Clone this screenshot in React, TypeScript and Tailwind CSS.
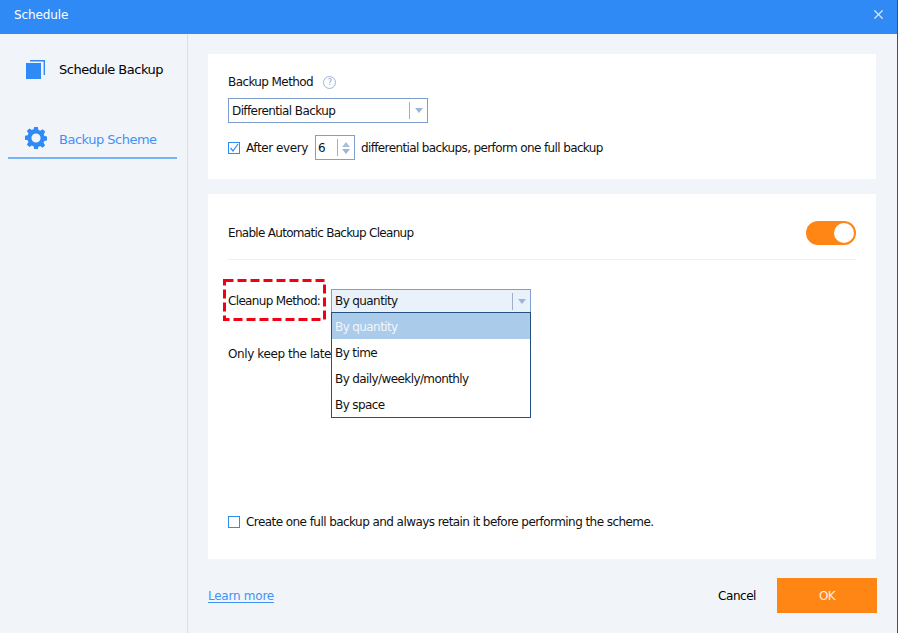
import React from 'react';
import { X } from 'lucide-react';

const Caret = () => (
  <svg width="8" height="5" viewBox="0 0 8 5" className="shrink-0">
    <path d="M0 0h8L4 5z" fill="#9db6d6" />
  </svg>
);

const GearIcon = () => (
  <svg width="22" height="22" viewBox="0 0 24 24" fill="#2f8af5" className="shrink-0">
    <path d="M10 0h4l.6 3.2c.7.2 1.3.5 1.9.9l2.8-1.7 2.8 2.8-1.8 2.7c.4.6.6 1.2.8 1.9l2.9.6v4.2l-3 .6c-.2.7-.4 1.3-.8 1.9l1.8 2.7-2.8 2.8-2.7-1.8c-.6.4-1.2.6-1.9.8L14 24h-4l-.6-3.1c-.7-.2-1.3-.5-1.9-.8l-2.7 1.8L2 19l1.8-2.7c-.4-.6-.6-1.2-.8-1.9L0 13.8V9.6l3-.6c.2-.7.5-1.3.8-1.9L2 4.4 4.8 1.6l2.7 1.7c.6-.4 1.2-.7 1.9-.9zM12 7a5 5 0 1 0 0 10 5 5 0 0 0 0-10z" fillRule="evenodd" />
  </svg>
);

const CopyIcon = () => (
  <svg width="20" height="20" viewBox="0 0 20 20" className="shrink-0">
    <rect x="0" y="3" width="15" height="16" fill="#2f8af5" />
    <path d="M4 .7h14.3V15" fill="none" stroke="#2f8af5" strokeWidth="1.4" />
  </svg>
);

export default function App() {
  return (
    <div className="w-[898px] h-[633px] flex flex-col bg-[#f1f5fa] text-[12px] text-[#111] border-r border-[#1c5a9e] overflow-hidden font-['DejaVu_Sans',sans-serif] tracking-[-0.6px]">
      {/* Title bar */}
      <div className="h-[34px] shrink-0 bg-[#2f8af5] flex items-center justify-between pl-[14px] pr-[11px] pb-[5px] text-white">
        <span className="tracking-[-0.1px]">Schedule</span>
        <X className="w-[15px] h-[15px] text-[#d5e6fb]" strokeWidth={2} />
      </div>

      <div className="flex flex-1 min-h-0">
        {/* Sidebar */}
        <div className="w-[188px] shrink-0 border-r border-[#d9dfe7] px-2 pt-[26px]">
          <div className="flex items-center gap-[13px] pl-[18px] h-[20px] text-[13px] text-black tracking-[-0.5px]">
            <CopyIcon />
            <span>Schedule Backup</span>
          </div>
          <div className="mt-[46px] h-[33px] flex items-start gap-[12px] pl-[17px] pt-[1px] border-b-2 border-[#79b3f8] w-[169px] text-[13px] text-[#3f92f6] tracking-[-0.5px]">
            <GearIcon />
            <span className="pt-[3px]">Backup Scheme</span>
          </div>
        </div>

        {/* Main */}
        <div className="flex-1 min-w-0 pl-5 pr-[20px] pt-5 flex flex-col">
          <div className="h-[125px] w-[668px] bg-white pl-5 pt-5">
            <div className="flex items-center gap-[10px] h-[16px]">
              <span>Backup Method</span>
              <span className="w-[13px] h-[13px] rounded-full border border-[#9db6d6] text-[#8eaad0] text-[9px] leading-[11px] text-center">?</span>
            </div>
            <div className="mt-[8px] w-[200px] h-[25px] border border-[#7f9fd0] flex items-center pl-[3px]">
              <span className="flex-1">Differential Backup</span>
              <span className="w-px h-[17px] bg-[#9db0c8]" />
              <span className="w-[17px] flex justify-center"><Caret /></span>
            </div>
            <div className="mt-[12px] flex items-center h-[25px]">
              <span className="w-[12px] h-[12px] border border-[#2f8af5] mr-[6px] flex items-center justify-center">
                <svg width="10" height="10" viewBox="0 0 10 10"><path d="M1.5 5l2.5 3L9 1" fill="none" stroke="#2f8af5" strokeWidth="1.2" /></svg>
              </span>
              <span className="tracking-[-0.42px]">After every</span>
              <div className="ml-[7px] w-[40px] h-[25px] border border-[#7f9fd0] flex items-center pl-[2px]">
                <span className="flex-1">6</span>
                <span className="w-px h-[17px] bg-[#9db0c8]" />
                <span className="w-[16px] flex flex-col items-center gap-[2px]">
                  <svg width="8" height="5" viewBox="0 0 8 5"><path d="M0 5L4 0l4 5z" fill="#a9bfdc" /></svg>
                  <Caret />
                </span>
              </div>
              <span className="ml-[6px] tracking-[-0.62px]">differential backups, perform one full backup</span>
            </div>
          </div>

          <div className="mt-[15px] h-[365px] w-[668px] bg-white px-5 flex flex-col">
            <div className="h-[66px] shrink-0 pt-[13px] border-b border-[#f0f1f3] flex items-center justify-between">
              <span className="tracking-[-0.7px]">Enable Automatic Backup Cleanup</span>
              <span className="w-[50px] h-[24px] rounded-full bg-[#ff8515] flex items-center justify-end pr-[2px]">
                <span className="w-[20px] h-[20px] rounded-full bg-white" />
              </span>
            </div>

            <div className="relative mt-[29px] flex items-start">
              <span className="w-[103px] h-[24px] leading-[24px] shrink-0 tracking-[-0.66px]">Cleanup Method:</span>
              {/* red annotation box */}
              <svg width="103" height="42" viewBox="0 0 103 42" className="absolute -left-[5px] -top-[10px]">
                <rect x="1.5" y="1.5" width="100" height="39" fill="none" stroke="#f00014" strokeWidth="3" strokeDasharray="9 4" />
              </svg>
              <div className="relative w-[200px]">
                <div className="h-[24px] border border-[#7f9fd0] bg-[#e9f1fb] flex items-center pl-[3px]">
                  <span className="flex-1">By quantity</span>
                  <span className="w-px h-[17px] bg-[#9db0c8]" />
                  <span className="w-[17px] flex justify-center"><Caret /></span>
                </div>
                {/* open list */}
                <div className="absolute left-0 top-[23px] z-10 w-[200px] border border-[#24517f] bg-white">
                  <div className="h-[26px] leading-[28px] pl-[3px] bg-[#abcbea] text-[#f1f6fc]">By quantity</div>
                  <div className="h-[26px] leading-[28px] pl-[3px]">By time</div>
                  <div className="h-[26px] leading-[28px] pl-[3px]">By daily/weekly/monthly</div>
                  <div className="h-[26px] leading-[28px] pl-[3px]">By space</div>
                </div>
              </div>
            </div>

            <div className="mt-[28px] h-[26px] leading-[26px] whitespace-nowrap tracking-[-0.4px]">Only keep the latest</div>

            <div className="mt-auto mb-[30px] flex items-center gap-[6px] h-[14px]">
              <span className="w-[12px] h-[12px] border border-[#2f8af5]" />
              <span className="tracking-[-0.56px]">Create one full backup and always retain it before performing the scheme.</span>
            </div>
          </div>

          {/* Footer */}
          <div className="mt-[19px] flex items-center justify-between">
            <a className="text-[#3f92f6] underline underline-offset-2 tracking-[-0.25px]">Learn more</a>
            <div className="flex items-center gap-[21px]">
              <span className="text-black tracking-[-0.45px]">Cancel</span>
              <button className="w-[100px] h-[35px] bg-[#ff8515] text-[#ffeede]">OK</button>
            </div>
          </div>
        </div>
      </div>
    </div>
  );
}
